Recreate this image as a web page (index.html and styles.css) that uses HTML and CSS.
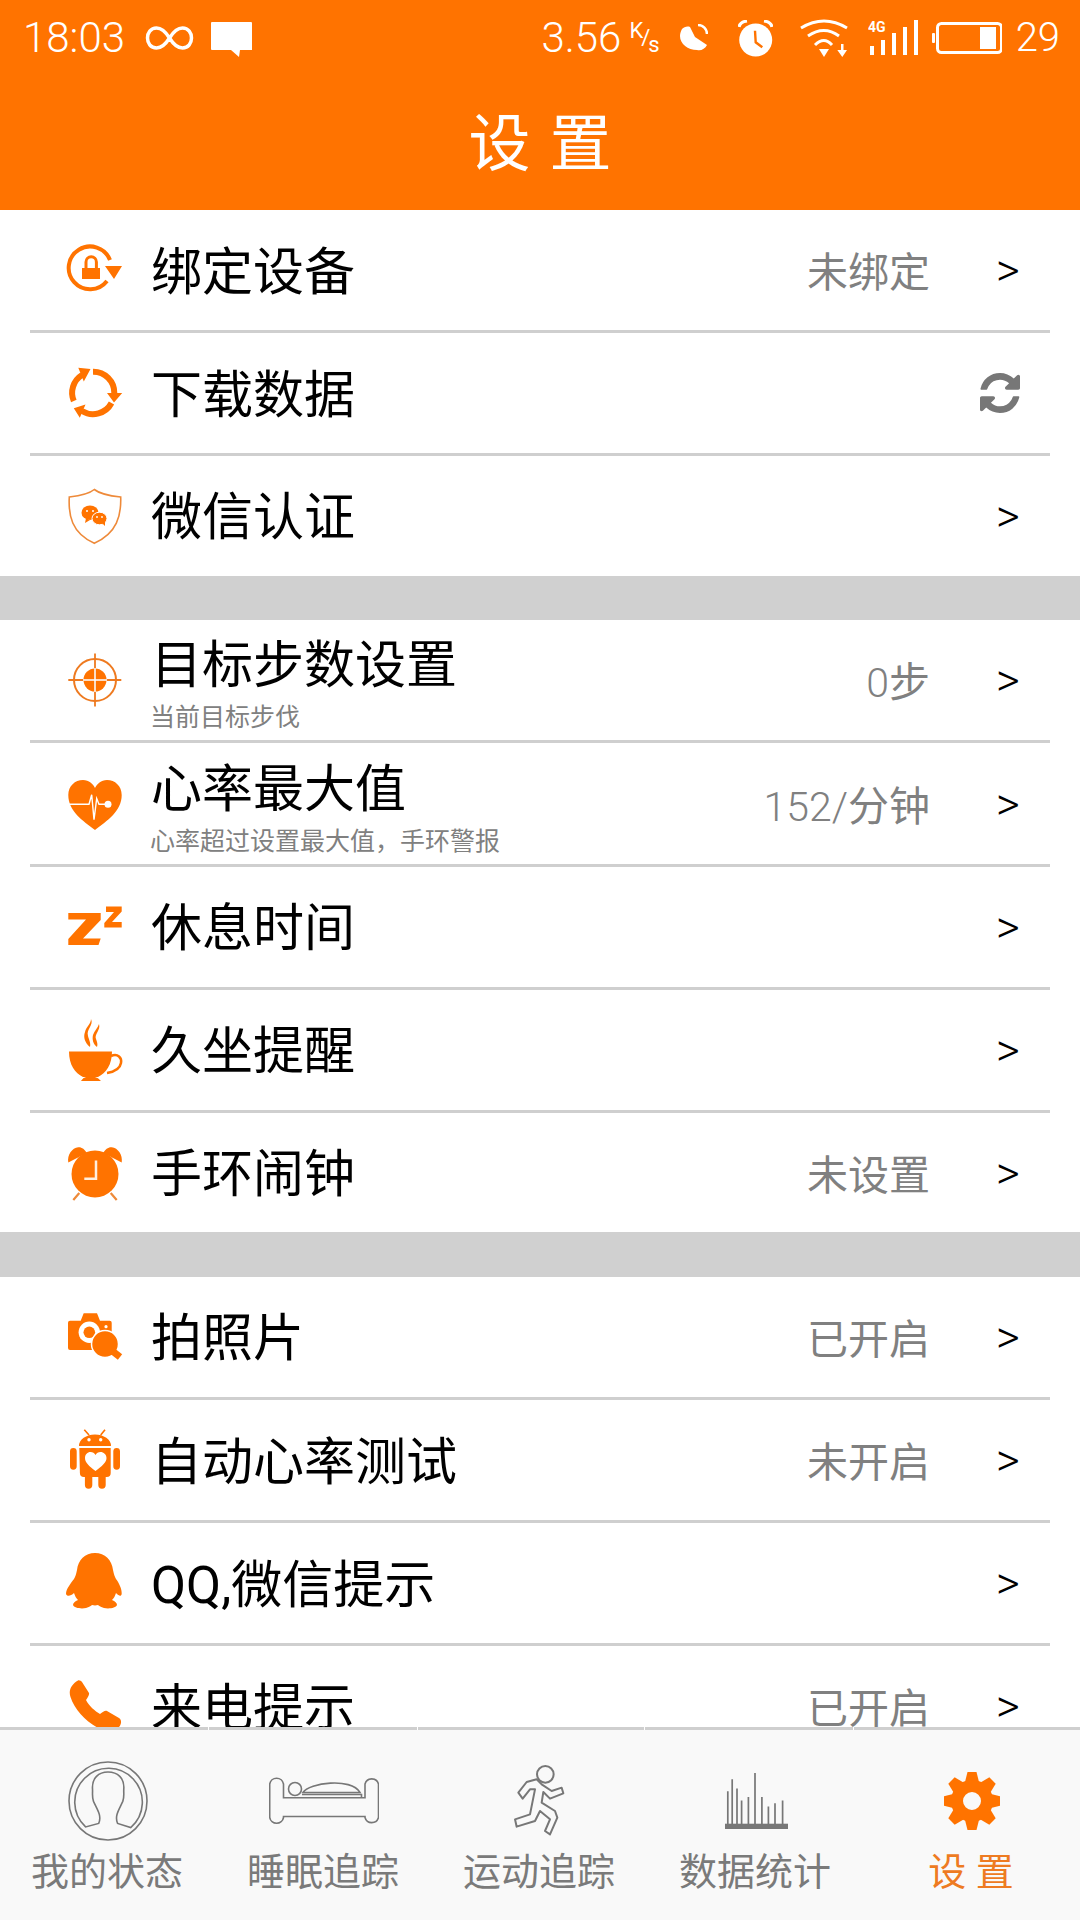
FILE: index.html
```html
<!DOCTYPE html>
<html>
<head>
  <title>设置</title>
  <link rel="stylesheet" href="styles.css">
</head>
<body>
  <div class="app">
    <div class="top">
      <div class="status">
        <span class="st-time">18:03</span>
        <svg class="st-inf" width="49" height="24" viewBox="0 0 48 24"><path d="M24 12C19 4 15 2 11 2 5 2 2 7 2 12s3 10 9 10c4 0 8-2 13-10 5-8 9-10 13-10 6 0 9 5 9 10s-3 10-9 10c-4 0-8-2-13-10z" fill="none" stroke="#fff" stroke-width="3.5"/></svg>
        <svg class="st-msg" width="41" height="35" viewBox="0 0 41 35"><path d="M1 0h39a1 1 0 0 1 1 1v27h-12l-1 7-8-7H1a1 1 0 0 1-1-1V1a1 1 0 0 1 1-1z" fill="#fff"/></svg>
        <span class="st-speed">3.56</span>
        <span class="st-unit"><span class="u-k">K</span><span class="u-slash">/</span><span class="u-s">s</span></span>
        <svg class="st-moon" width="28" height="27" viewBox="0 0 28 27"><path d="M2 5c2-2 5-3 8-2l5 10 12 8c-2 4-6 6-10 5C8 26 0 20 0 12c0-3 1-5 2-7z" fill="#fff"/><path d="M18 1c5 0 9 4 9 9" fill="none" stroke="#fff" stroke-width="2.5"/></svg>
        <svg class="st-alarm" width="35" height="37" viewBox="0 0 35 37"><circle cx="17.7" cy="20" r="16.5" fill="#fff"/><path d="M17 10.7l.7 11.6 6.6 5" fill="none" stroke="#ff7300" stroke-width="2.4"/><path d="M1 7q1-5 8-6M34 7q-1-5-8-6" fill="none" stroke="#fff" stroke-width="3.2"/></svg>
        <svg class="st-wifi" width="48" height="38" viewBox="0 0 48 38"><g fill="none" stroke="#fff" stroke-width="3"><path d="M1 9Q24-5 47 9"/><path d="M8 17Q24 6 39 17"/><path d="M15 26Q24 17 32 26"/></g><path d="M19 30h10l-5 8zM41 25h2.5v6H47l-4.7 7-5-7H41z" fill="#fff"/></svg>
        <svg class="st-signal" width="50" height="36" viewBox="0 0 50 36"><text class="st-4g" x="0" y="12">4G</text><path d="M2 26h4v9H2zM13 20h4v15h-4zM24 13h4v22h-4zM35 7h4v28h-4zM46 0h4v35h-4z" fill="#fff"/></svg>
        <svg class="st-batt" width="70" height="32" viewBox="0 0 70 32"><rect x="5.5" y="1.5" width="64" height="29" rx="4" fill="none" stroke="#fff" stroke-width="3"/><rect x="48" y="5" width="16" height="22" fill="#fff"/><rect x="0" y="11" width="3" height="10" rx="1" fill="#fff"/></svg>
        <span class="st-batt-num">29</span>
      </div>
      <div class="title">设 置</div>
    </div>

    <div class="list">
      <div class="group">
        <div class="row">
          <svg class="ic" viewBox="0 0 60 60"><path d="M45 20A21.4 21.4 0 1 0 42 41" fill="none" stroke="#ff7300" stroke-width="4"/><path d="M40 26h17L49 39zM17 28h18v11H17z" fill="#ff7300"/><path d="M21 28v-6a5.2 5.2 0 0 1 10.400 0v6" fill="none" stroke="#ff7300" stroke-width="3"/></svg>
          <span class="label">绑定设备</span>
          <span class="value">未绑定</span>
          <span class="arrow">&gt;</span>
        </div>
        <div class="row">
          <svg class="ic" viewBox="0 0 60 60"><g fill="none" stroke="#ff7300" stroke-width="6"><path d="M8.800 38A21 21 0 0 1 17 12"/><path d="M28 8.700A21 21 0 0 1 49.300 30"/><path d="M46.500 40A21 21 0 0 1 17 48"/></g><path d="M13.300 4.800L25.500 6l-6.700 12.500zM42 30h15.200L49 39.500zM8.800 45.300L20.500 41.500l-5.700 13.300z" fill="#ff7300"/></svg>
          <span class="label">下载数据</span>
          <span class="arrow"><svg class="sync" viewBox="128 128 1536 1536"><path d="M1639 1056q0 5-1 7-64 268-268 434.500t-478 166.500q-146 0-282.500-55t-243.500-157l-129 129q-19 19-45 19t-45-19-19-45v-448q0-26 19-45t45-19h448q26 0 45 19t19 45-19 45l-137 137q71 66 161 102t187 36q134 0 250-65t186-179q11-17 53-117 8-23 30-23h192q13 0 22.500 9.500t9.500 22.500zm25-800v448q0 26-19 45t-45 19h-448q-26 0-45-19t-19-45 19-45l138-138q-148-137-349-137-134 0-250 65t-186 179q-11 17-53 117-8 23-30 23h-199q-13 0-22.500-9.500t-9.500-22.500v-7q65-268 270-434.500t480-166.500q146 0 284 55.500t245 156.500l130-129q19-19 45-19t45 19 19 45z" fill="#777"/></svg></span>
        </div>
        <div class="row">
          <svg class="ic" viewBox="0 0 60 60"><path d="M29.300 3.500C24 8 13 10 4.300 11c-1 18 2 36 25 46.300 23-10.300 27-28 26.400-46.300C46 10 35 8 29.300 3.500z" fill="none" stroke="#ee8a3a" stroke-width="1.600"/><ellipse cx="25" cy="26.700" rx="8.500" ry="7.300" fill="#ff7300"/><ellipse cx="34.500" cy="32.500" rx="7.500" ry="6.300" fill="#ff7300" stroke="#fff" stroke-width="1"/><path d="M21 32l-1 5 5-3zM37 37l3 3v-5z" fill="#ff7300"/><circle cx="22" cy="25" r="1" fill="#fff"/><circle cx="28" cy="25" r="1" fill="#fff"/><circle cx="32" cy="31" r=".9" fill="#fff"/><circle cx="37" cy="31" r=".9" fill="#fff"/></svg>
          <span class="label">微信认证</span>
          <span class="arrow">&gt;</span>
        </div>
      </div>

      <div class="band"></div>

      <div class="group">
        <div class="row">
          <svg class="ic" viewBox="0 0 60 60"><circle cx="30" cy="30" r="21" fill="none" stroke="#ee7a20" stroke-width="2"/><circle cx="30" cy="30" r="11.500" fill="#ff7300"/><path d="M3.300 30h53M30 3.500v53" stroke="#ee7a20" stroke-width="1.800"/><path d="M18 30h24M30 18v24" stroke="#fff" stroke-width="1.500"/></svg>
          <div class="text">
            <span class="label">目标步数设置</span>
            <span class="sub">当前目标步伐</span>
          </div>
          <span class="value"><span class="num">0</span>步</span>
          <span class="arrow">&gt;</span>
        </div>
        <div class="row">
          <svg class="ic" viewBox="0 0 60 60"><path d="M30 56C18 47 3.300 37 3.300 21 3.300 12 10 6 18 6c6 0 10 4 12 8 2-4 6-8 12-8 8 0 14.700 6 14.700 15C56.700 37 42 47 30 56z" fill="#ff7300"/><path d="M4 30.300h20l2.700-9.500L29 45.600l2.700-21 2.300 5.700h8" fill="none" stroke="#fff" stroke-width="1.400"/><circle cx="43" cy="30.300" r="3.500" fill="#fff"/></svg>
          <div class="text">
            <span class="label">心率最大值</span>
            <span class="sub">心率超过设置最大值，手环警报</span>
          </div>
          <span class="value"><span class="num">152/</span>分钟</span>
          <span class="arrow">&gt;</span>
        </div>
        <div class="row">
          <svg class="ic" viewBox="0 0 60 60"><path d="M3.300 16h32.400v7L18 41.500h17.700L33.500 48H3.300v-6L21 22.500H3.300zM41 9.500h15.700v5L47 25h9.700v5.500H39.300V26L49 15h-8z" fill="#ff7300"/></svg>
          <span class="label">休息时间</span>
          <span class="arrow">&gt;</span>
        </div>
        <div class="row">
          <svg class="ic" viewBox="0 0 60 60"><path d="M4 31.500h43C47 45 41 53 33 57H18C10 53 4 45 4 31.500zM16 61q2-3.500 5-4h9q3 .5 6 4z" fill="#ff7300"/><path d="M46 36c7-3 11 2 10 7-1 6-8 9-14 10" fill="none" stroke="#ff7300" stroke-width="2.500"/><path d="M26-1c3 6-5 10-3 17 1 4 3 7 2 11-5-4-7-10-5-15 1-5 6-8 6-13zM34 4c2 6-5 10-3 15 1 3 2 5 1 8-4-3-5-8-4-12 1-4 5-7 6-11z" fill="#ff7300"/></svg>
          <span class="label">久坐提醒</span>
          <span class="arrow">&gt;</span>
        </div>
        <div class="row">
          <svg class="ic" viewBox="0 0 60 60"><circle cx="30" cy="31" r="23.500" fill="#ff7300"/><path d="M3.300 19.600C2 12 7 5 13.300 4.300c3-.4 6.700 2 8.400 5.700zM56.700 19.600C58 12 53 5 46.700 4.300c-3-.4-6.700 2-8.400 5.700z" fill="#ff7300"/><path d="M8.300 57l6-7M51.700 57l-6-7" stroke="#ee8a3a" stroke-width="2.200"/><path d="M31 17.600v18.100H19.300" fill="none" stroke="#ffeedd" stroke-width="2.500"/></svg>
          <span class="label">手环闹钟</span>
          <span class="value">未设置</span>
          <span class="arrow">&gt;</span>
        </div>
      </div>

      <div class="band"></div>

      <div class="group">
        <div class="row">
          <svg class="ic" viewBox="0 0 60 60"><path d="M5 13.700h10.700l3-7.400h13.300l3 7.400h9.700a2 2 0 0 1 2 2V41a2 2 0 0 1-2 2H5a2 2 0 0 1-2-2V15.700a2 2 0 0 1 2-2z" fill="#ff7300"/><circle cx="24.300" cy="25.300" r="10.700" fill="#fff"/><circle cx="24.300" cy="25.300" r="5.800" fill="#ff7300"/><circle cx="41" cy="19.700" r="1.600" fill="#fff"/><circle cx="40" cy="37" r="13.500" fill="#ff7300" stroke="#fff" stroke-width="1.500"/><path d="M48 44.500l7 5.500" stroke="#ff7300" stroke-width="7"/></svg>
          <span class="label">拍照片</span>
          <span class="value">已开启</span>
          <span class="arrow">&gt;</span>
        </div>
        <div class="row">
          <svg class="ic" viewBox="0 0 60 60"><path d="M14 16a16 11.500 0 0 1 32 0zM14.300 18h31.400v25a4 4 0 0 1-4 4h-1v8a3.700 3.700 0 0 1-7.400 0v-8h-6v8a3.700 3.700 0 0 1-7.400 0v-8h-1a4 4 0 0 1-4-4zM5 21.300a3.300 3.300 0 0 1 6.700 0v15a3.300 3.300 0 0 1-6.700 0zM48.300 21.300a3.300 3.300 0 0 1 6.700 0v15a3.300 3.300 0 0 1-6.700 0z" fill="#ff7300"/><path d="M19.300-.3L24 5M40-.3L35.700 5" stroke="#ff7300" stroke-width="1.600"/><circle cx="24" cy="9.700" r="1.700" fill="#fff"/><circle cx="35.700" cy="9.700" r="1.700" fill="#fff"/><path d="M30.500 41C24 36 20 32.500 20 28c0-3.500 2.500-6 5.500-6 2.200 0 4 1.200 5 3 1-1.800 2.800-3 5-3 3 0 6 2.500 6 6 0 4.500-4.500 8-11 13z" fill="#fff"/></svg>
          <span class="label">自动心率测试</span>
          <span class="value">未开启</span>
          <span class="arrow">&gt;</span>
        </div>
        <div class="row">
          <svg class="ic" viewBox="0 0 60 60"><path d="M30 0c10 0 17 7 18 17 1 5 2 7 3 9 3 4 6 10 5.700 15-.7 3-2.700 2-5.700-1-1 3-2 5-4 7 3 1 5 3 5 5-1 3-8 4-13 3-3-1-5-2-6-3-2 .5-4 .5-6 0-1 1-3 2-6 3-5 1-12 0-13-3 0-2 2-4 5-5-2-2-3-4-4-7-3 3-7 4-8 1C1 36 6 30 9 26c1-2 2-4 3-9C13 7 20 0 30 0z" fill="#ff7300"/></svg>
          <span class="label">QQ,微信提示</span>
          <span class="arrow">&gt;</span>
        </div>
        <div class="row">
          <svg class="ic" viewBox="0 0 60 60"><path d="M13 4.500c1.500-.5 3 .5 4 1.500l7 11c.5 2-1 4-3 7 3 6 9 11 14 14 3-2 5-4 7-3l12 7c3 2 2.500 6 0 9-4 4-10 5-16 3C24 49 10 35 5.500 21 3 14 7 8 13 4.500z" fill="#ff7300"/></svg>
          <span class="label">来电提示</span>
          <span class="value">已开启</span>
          <span class="arrow">&gt;</span>
        </div>
      </div>
    </div>

    <div class="tabs">
      <i class="sep sep-1"></i><i class="sep sep-2"></i><i class="sep sep-3"></i><i class="sep sep-4"></i>
      <div class="tab">
        <div class="tab-icon">
          <svg width="80" height="80" viewBox="0 0 80 80"><g fill="none" stroke="#777" stroke-width="1.600"><circle cx="40" cy="40" r="39"/><path d="M17.600 65.900A33.800 33.800 0 1 1 62.700 66.600L49.600 62.400C46.200 54.800 51.400 48 54.800 40.400 56.500 35.900 55.500 32.400 55.800 27.900 56.500 16.900 49.600 11 40 11 30.700 11 23.800 16.900 24.500 27.900 24.800 32.400 23.800 35.900 25.500 40.400 29 48 34.100 54.800 30.700 62.400z"/></g></svg>
        </div>
        <span class="tab-name">我的状态</span>
      </div>
      <div class="tab">
        <div class="tab-icon">
          <svg width="110" height="48" viewBox="0 0 110 48"><g fill="none" stroke="#777" stroke-width="1.600"><path d="M14.500 20.700H96V7a7 7 0 0 1 13.500 0v33.500a7 7 0 0 1-13.500 0v-1H14.500v1a7 7 0 0 1-13.800 0V7a7 7 0 0 1 13.800 0z"/><circle cx="26" cy="12" r="6.500"/><path d="M34 15.500C40 6 82 0 91 15.500zM33 17.500h59.500v3"/></g></svg>
        </div>
        <span class="tab-name">睡眠追踪</span>
      </div>
      <div class="tab">
        <div class="tab-icon">
          <svg width="80" height="90" viewBox="0 0 240 270"><circle cx="136" cy="55" r="25" fill="none" stroke="#777" stroke-width="6"/><path d="M110 70L80 78 55 110l13 18 22-28h15l-15 75-45 15 5 22 55-17 15-30 30 25-15 35 15 10 22-50-7-20-40-25 5-32 20 20 40-16-5-17-30 10-30-20z" fill="none" stroke="#777" stroke-width="6" stroke-linejoin="round"/></svg>
        </div>
        <span class="tab-name">运动追踪</span>
      </div>
      <div class="tab">
        <div class="tab-icon">
          <svg width="63" height="56" viewBox="0 0 63 56"><path d="M2.800 52V18.300M7.200 52V6.200M12 52V15.500M16.600 52V27.600M23.400 52V24M30 52V0M36.900 52V24M43.400 52V33.400M50 52V30.300M57.600 52V27.600" stroke="#777" stroke-width="1.700"/><rect y="50.700" width="63" height="5.300" fill="#777"/></svg>
        </div>
        <span class="tab-name">数据统计</span>
      </div>
      <div class="tab">
        <div class="tab-icon">
          <svg width="56" height="58" viewBox="0 0 56 58"><defs><path id="tooth" d="M21 10l2.500-10h9L35 10z" fill="#ff7300"/></defs><use href="#tooth"/><use href="#tooth" transform="rotate(45 28 29)"/><use href="#tooth" transform="rotate(90 28 29)"/><use href="#tooth" transform="rotate(135 28 29)"/><use href="#tooth" transform="rotate(180 28 29)"/><use href="#tooth" transform="rotate(225 28 29)"/><use href="#tooth" transform="rotate(270 28 29)"/><use href="#tooth" transform="rotate(315 28 29)"/><circle cx="28" cy="29" r="15" fill="none" stroke="#ff7300" stroke-width="12"/></svg>
        </div>
        <span class="tab-name tab-on">设 置</span>
      </div>
    </div>
  </div>
</body>
</html>
```

FILE: styles.css
```css
html, body {
  margin: 0;
  padding: 0;
}

body {
  font-family: Roboto, "Noto Sans CJK SC", sans-serif;
  background: #fff;
}

.app {
  width: 1080px;
  height: 1920px;
  display: flex;
  flex-direction: column;
  overflow: hidden;
}

/* orange header */
.top {
  height: 210px;
  background: #ff7300;
  color: #fff;
  flex-shrink: 0;
}

.status {
  height: 75px;
  padding: 0 20px 0 23px;
  display: flex;
  align-items: center;
  font-weight: 300;
  font-size: 42px;
}

.st-inf { margin-left: 20px; }
.st-msg { margin-left: 17px; margin-top: 4px; }
.st-speed { margin-left: auto; }
.st-moon { margin-left: 20px; }
.st-alarm { margin-left: 30px; margin-top: 2px; }
.st-wifi { margin-left: 27px; margin-top: 1px; }
.st-signal { margin-left: 20px; }
.st-batt { margin-left: 14px; }
.st-batt-num { margin-left: 14px; font-size: 40px; }

.st-4g {
  font-size: 14px;
  font-weight: 700;
  fill: #fff;
}

.st-unit {
  height: 34px;
  margin-left: 8px;
  display: flex;
  font-size: 22px;
  font-weight: 400;
  line-height: 20px;
}

.u-k { align-self: flex-start; }
.u-slash { align-self: center; margin-left: -2px; }
.u-s { align-self: flex-end; margin-left: -2px; }

.title {
  font-family: "Noto Sans CJK SC", sans-serif;
  font-size: 62px;
  font-weight: 400;
  word-spacing: 5px;
  line-height: 70px;
  margin-top: 29px;
  text-align: center;
}

/* settings list */
.list {
  flex: 1;
  overflow: hidden;
}

.band {
  height: 44.7px;
  background: #d0d0d0;
}

.row {
  box-sizing: border-box;
  height: 123.2px;
  margin: 0 30px;
  padding: 0 22px 0 35px;
  border-bottom: 3px solid #cfcfcf;
  display: flex;
  align-items: center;
}

.group .row:last-child {
  height: 119.2px;
  border-bottom: none;
}

.ic {
  width: 60px;
  height: 60px;
  margin-right: 26px;
  overflow: visible;
  flex-shrink: 0;
}

.label {
  font-size: 51px;
  color: #000;
  line-height: 62px;
}

.row > .label {
  margin-top: 5px;
}

.text {
  display: flex;
  flex-direction: column;
  padding-top: 8px;
}

.sub {
  font-size: 25px;
  line-height: 30px;
  margin-top: 6px;
  margin-left: -1px;
  color: #808080;
}

.value {
  margin-left: auto;
  margin-bottom: 2px;
  font-size: 41px;
  color: #808080;
}

.num {
  font-weight: 300;
}

.arrow {
  width: 40px;
  margin-left: 58px;
  font-size: 46px;
  font-weight: 300;
  color: #000;
  text-align: center;
  display: flex;
  justify-content: center;
  align-items: center;
}

.label + .arrow,
.text + .arrow {
  margin-left: auto;
}

.sync {
  width: 40px;
  height: 40px;
  flex-shrink: 0;
  margin-right: 17px;
}

/* bottom tabs */
.tabs {
  position: relative;
  box-sizing: border-box;
  height: 193px;
  flex-shrink: 0;
  background: #f9f9f9;
  border-top: 3px solid #cfcfcf;
  display: grid;
  grid-template-columns: repeat(5, 216px);
}

.sep {
  position: absolute;
  top: -3px;
  width: 1px;
  height: 3px;
  background: #fff;
}

.sep-1 { left: 208px; }
.sep-2 { left: 417px; }
.sep-3 { left: 644px; }
.sep-4 { left: 853px; }

.tab {
  display: flex;
  flex-direction: column;
  align-items: center;
}

.tab-icon {
  height: 90px;
  margin-top: 26px;
  display: flex;
  align-items: center;
  justify-content: center;
}

.tab-name {
  font-family: "Noto Sans CJK SC", sans-serif;
  font-size: 38px;
  line-height: 46px;
  margin-right: 2px;
  color: #7a7a7a;
}

.tab-on {
  color: #ee7b22;
  word-spacing: 1px;
}
```
